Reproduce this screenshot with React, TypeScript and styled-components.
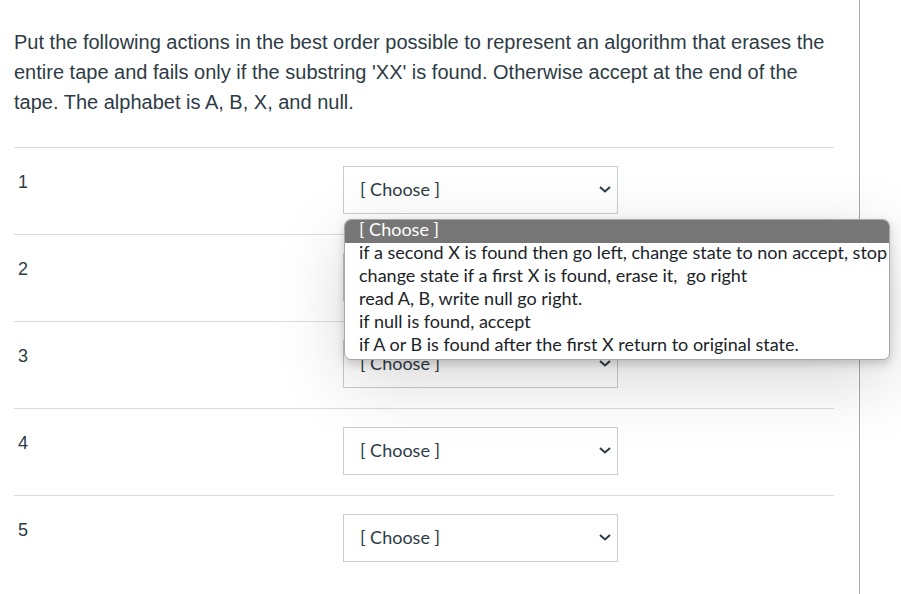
import React from 'react';
import styled, { createGlobalStyle } from 'styled-components';

const options = [
  '[ Choose ]',
  'if a second X is found then go left, change state to non accept, stop',
  'change state if a first X is found, erase it,  go right',
  'read A, B, write null go right.',
  'if null is found, accept',
  'if A or B is found after the first X return to original state.',
];

const GlobalStyle = createGlobalStyle`
  html, body {
    margin: 0;
    padding: 0;
    background: #fff;
  }
  body {
    font-family: "Liberation Sans", Arial, sans-serif;
    color: #2d3b45;
  }
`;

const Page = styled.div`
  display: flex;
  min-height: 594px;
`;

const Main = styled.main`
  width: 860px;
  box-sizing: border-box;
  padding: 27px 25px 0 14px;
  border-right: 1px solid #a8a8a8;
`;

const Question = styled.p`
  margin: 0 0 30px;
  font-size: 20px;
  line-height: 30px;
  white-space: pre-wrap;
`;

const Row = styled.div`
  display: flex;
  align-items: flex-start;
  height: 87px;
  box-sizing: border-box;
  border-top: 1px solid #dcdcdc;
  padding-top: 18px;
`;

const Number = styled.div`
  width: 329px;
  padding: 4px 0 0 4px;
  box-sizing: border-box;
  font-size: 18px;
  line-height: 24px;
`;

const SelectWrap = styled.div`
  position: relative;
  width: 275px;
  height: 48px;
`;

const Select = styled.div`
  display: flex;
  align-items: center;
  justify-content: space-between;
  height: 100%;
  box-sizing: border-box;
  padding: 0 6px 2px 16px;
  border: 1px solid #c7cdd1;
  background: #fff;
  font-family: Lato, "Noto Sans", sans-serif;
  font-size: 18px;
  color: #2d3b45;
`;

const Popup = styled.ul`
  position: absolute;
  z-index: 2;
  top: 53px;
  left: 1px;
  width: 546px;
  margin: 0;
  padding: 0 0 1px;
  list-style: none;
  box-sizing: border-box;
  border: 1px solid #a9a9a9;
  border-radius: 7px;
  overflow: hidden;
  background: #fff;
  box-shadow: 0 4px 10px rgba(0, 0, 0, 0.18), 0 20px 70px rgba(0, 0, 0, 0.16);
  font-family: Lato, "Noto Sans", sans-serif;
  font-size: 18px;
`;

const Option = styled.li<{ $active?: boolean }>`
  height: 23px;
  line-height: 19px;
  padding-left: 14px;
  white-space: pre;
  background: ${(p) => (p.$active ? '#767676' : 'transparent')};
  color: ${(p) => (p.$active ? '#fff' : '#1b2328')};
`;

const Chevron = () => (
  <svg width="12" height="7" viewBox="0 0 12 7">
    <polyline points="1,1 6,5.5 11,1" fill="none" stroke="#2d3b45" strokeWidth="2" />
  </svg>
);

const App: React.FC = () => {
  return (
    <Page>
      <GlobalStyle />
      <Main>
        <Question>
          Put the following actions in the best order possible to represent an algorithm that erases the entire tape and fails only if the substring 'XX' is found. Otherwise accept at the end of the tape. The alphabet is A, B, X, and null.
        </Question>
        {[1, 2, 3, 4, 5].map((n) => (
          <Row key={n}>
            <Number>{n}</Number>
            <SelectWrap>
              <Select>
                [ Choose ]
                <Chevron />
              </Select>
              {n === 1 && (
                <Popup>
                  {options.map((o, i) => (
                    <Option key={i} $active={i === 0}>{o}</Option>
                  ))}
                </Popup>
              )}
            </SelectWrap>
          </Row>
        ))}
      </Main>
    </Page>
  );
};

export default App;
